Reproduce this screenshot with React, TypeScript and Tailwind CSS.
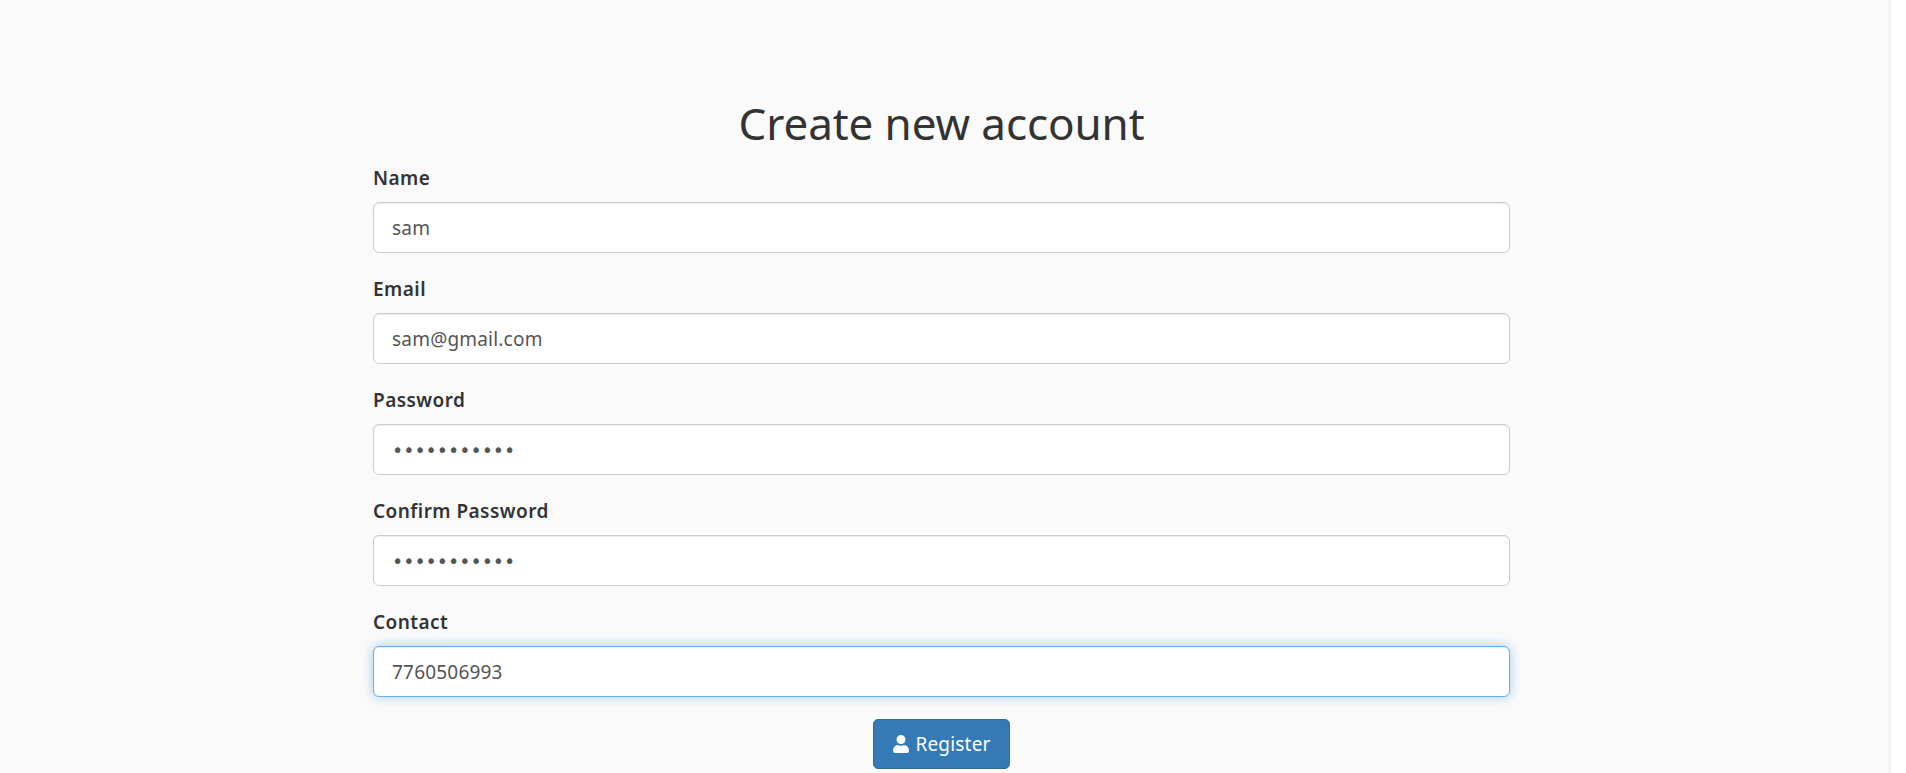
import { FaUser } from "react-icons/fa";

const fields = [
  { label: "Name", type: "text", value: "sam" },
  { label: "Email", type: "text", value: "sam@gmail.com" },
  { label: "Password", type: "password", value: "password123" },
  { label: "Confirm Password", type: "password", value: "password123" },
  { label: "Contact", type: "text", value: "7760506993", focused: true },
];

export default function App() {
  return (
    <div className="flex h-[773px] overflow-hidden bg-white font-['Noto_Sans',sans-serif] text-[#333]">
      <main className="h-full flex-1 border-r-2 border-[#f0f0f0] bg-[#fafafa] pr-[379px] pl-[373px] pt-[90px]">
        <h1 className="text-center text-[44px] leading-[66px] font-normal tracking-[-0.1px]">Create new account</h1>
        <form className="mt-[2px] flex flex-col">
          {fields.map((field) => (
            <div key={field.label} className="h-[111px]">
              <label className="block h-[44px] text-[19px] leading-[40px] font-semibold tracking-[0.45px]">{field.label}</label>
              <input
                type={field.type}
                defaultValue={field.value}
                readOnly
                className={[
                  "h-[51px] w-full rounded-[6px] border bg-white px-[18px] text-[19px] text-[#555] outline-none",
                  field.type === "password" ? "font-['DejaVu_Sans',sans-serif]" : "tracking-[0.2px]",
                  field.focused
                    ? "border-[#66afe9] shadow-[inset_0_1px_1px_rgba(0,0,0,0.075),0_0_12px_rgba(102,175,233,0.6)]"
                    : "border-[#ccc] shadow-[inset_0_1px_1px_rgba(0,0,0,0.075)]",
                ].join(" ")}
              />
            </div>
          ))}
          <div className="mt-[6px] flex justify-center">
            <button type="button" className="flex h-[50px] w-[137px] items-center justify-center gap-[5px] rounded-[5px] border border-[#2e6da4] bg-[#337ab7] text-[19px] tracking-[0.2px] text-white">
              <FaUser className="h-[18px] w-[18px]" />
              Register
            </button>
          </div>
        </form>
      </main>
      <div className="h-full w-[15px] shrink-0 bg-white" />
    </div>
  );
}
